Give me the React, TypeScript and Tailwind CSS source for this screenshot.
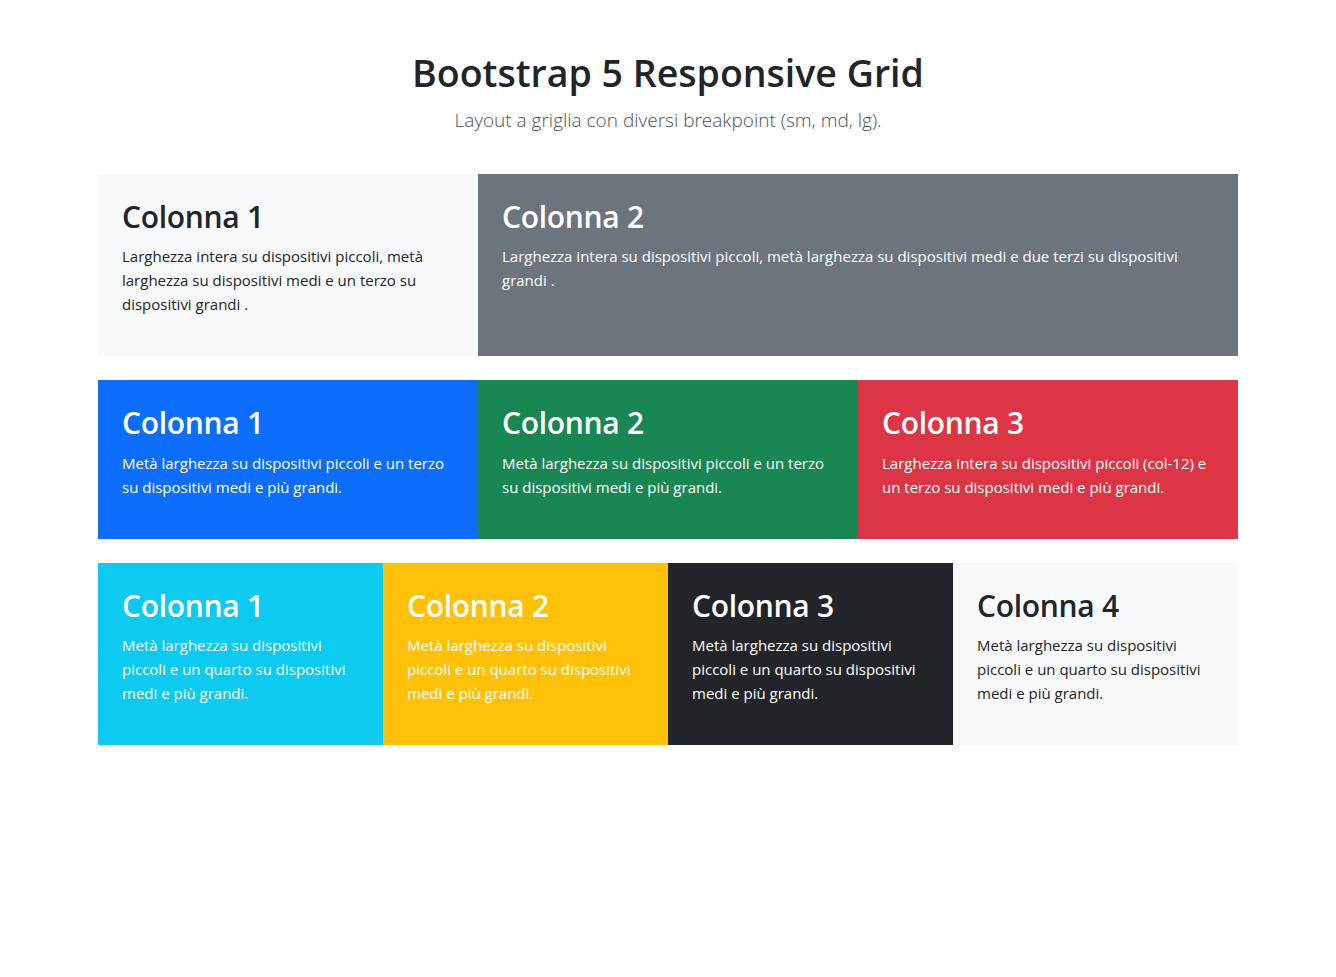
const font = { fontFamily: '"Open Sans", "Noto Sans", sans-serif' };

type Col = { title: string; text: string; bg: string; fg: string; span: string };

function Box({ c }: { c: Col }) {
  return (
    <div className={`${c.span} ${c.bg} ${c.fg} p-6`}>
      <h2 className="text-[30px] leading-[38.4px] font-semibold mb-2 tracking-[-0.3px]">{c.title}</h2>
      <p className="text-[15px] leading-6 mb-4">{c.text}</p>
    </div>
  );
}

const row1: Col[] = [
  { title: 'Colonna 1', text: 'Larghezza intera su dispositivi piccoli, metà larghezza su dispositivi medi e un terzo su dispositivi grandi .', bg: 'bg-[#f8f9fa]', fg: 'text-[#212529]', span: 'col-span-4' },
  { title: 'Colonna 2', text: 'Larghezza intera su dispositivi piccoli, metà larghezza su dispositivi medi e due terzi su dispositivi grandi .', bg: 'bg-[#6c757d]', fg: 'text-white', span: 'col-span-8' },
];
const row2: Col[] = [
  { title: 'Colonna 1', text: 'Metà larghezza su dispositivi piccoli e un terzo su dispositivi medi e più grandi.', bg: 'bg-[#0d6efd]', fg: 'text-white', span: 'col-span-4' },
  { title: 'Colonna 2', text: 'Metà larghezza su dispositivi piccoli e un terzo su dispositivi medi e più grandi.', bg: 'bg-[#198754]', fg: 'text-white', span: 'col-span-4' },
  { title: 'Colonna 3', text: 'Larghezza intera su dispositivi piccoli (col-12) e un terzo su dispositivi medi e più grandi.', bg: 'bg-[#dc3545]', fg: 'text-white', span: 'col-span-4' },
];
const q = 'Metà larghezza su dispositivi piccoli e un quarto su dispositivi medi e più grandi.';
const row3: Col[] = [
  { title: 'Colonna 1', text: q, bg: 'bg-[#0dcaf0]', fg: 'text-white', span: 'col-span-3' },
  { title: 'Colonna 2', text: q, bg: 'bg-[#ffc107]', fg: 'text-white', span: 'col-span-3' },
  { title: 'Colonna 3', text: q, bg: 'bg-[#212529]', fg: 'text-white', span: 'col-span-3' },
  { title: 'Colonna 4', text: q, bg: 'bg-[#f8f9fa]', fg: 'text-[#212529]', span: 'col-span-3' },
];

export default function App() {
  return (
    <div style={font} className="min-h-screen bg-white text-[#212529]">
      <div className="w-[1140px] mx-auto pt-[49px]">
        <header className="text-center mb-[39px]">
          <h1 className="text-[37.5px] leading-[48px] font-semibold mb-2">Bootstrap 5 Responsive Grid</h1>
          <p className="text-[19px] leading-[30px] font-light text-[#4a5057]">Layout a griglia con diversi breakpoint (sm, md, lg).</p>
        </header>
        <div className="grid grid-cols-12 mb-6">{row1.map((c, i) => <Box key={i} c={c} />)}</div>
        <div className="grid grid-cols-12 mb-6">{row2.map((c, i) => <Box key={i} c={c} />)}</div>
        <div className="grid grid-cols-12 mb-6">{row3.map((c, i) => <Box key={i} c={c} />)}</div>
      </div>
    </div>
  );
}
